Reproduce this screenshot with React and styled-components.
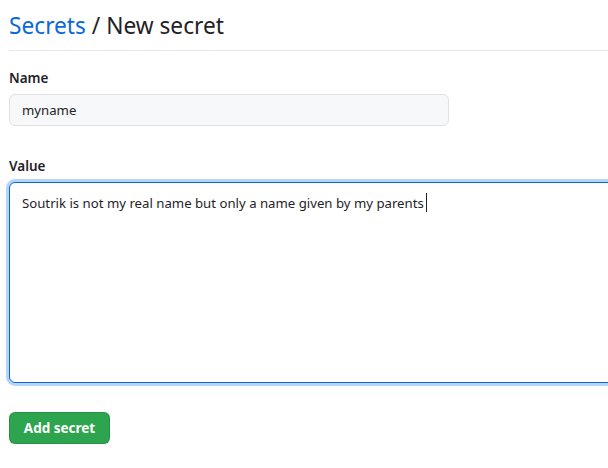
import React from "react";
import styled, { createGlobalStyle } from "styled-components";

const GlobalStyle = createGlobalStyle`
  html, body {
    margin: 0;
    padding: 0;
    background: #ffffff;
    overflow: hidden;
  }
  body {
    font-family: "Noto Sans", "Open Sans", sans-serif;
    color: #1f2328;
  }
`;

const Page = styled.div`
  width: 608px;
  height: 468px;
  padding: 0 0 0 9px;
  box-sizing: border-box;
  overflow: hidden;
`;

const Header = styled.div`
  padding-top: 10px;
  padding-bottom: 8px;
  border-bottom: 1px solid #e5e7ea;
  margin-right: -20px;
`;

const Title = styled.h1`
  margin: 0;
  font-size: 22.7px;
  font-weight: 400;
  line-height: 32px;
  color: #1f2328;
`;

const Crumb = styled.a`
  color: #0969da;
  text-decoration: none;
`;

const Form = styled.form`
  padding-top: 17px;
`;

const Field = styled.div`
  margin-bottom: ${(p) => p.$gap || 0}px;
`;

const Label = styled.label`
  display: block;
  font-size: 13.5px;
  font-weight: 600;
  line-height: 20px;
  margin-bottom: 6px;
  color: #1f2328;
`;

const Input = styled.input`
  display: block;
  box-sizing: border-box;
  width: 440px;
  height: 32px;
  padding: 0 12px;
  font-family: inherit;
  font-size: 13.2px;
  color: #1f2328;
  background: #f6f8fa;
  border: 1px solid #dde1e6;
  border-radius: 6px;
  outline: none;
`;

const TextBox = styled.div`
  box-sizing: border-box;
  width: 640px;
  height: 201px;
  padding: 10px 12px;
  font-size: 13.2px;
  line-height: 20px;
  color: #1f2328;
  background: #ffffff;
  border: 1px solid #0969da;
  border-radius: 6px;
  box-shadow: 0 0 0 3px #b6d5f6;
`;

const Caret = styled.span`
  display: inline-block;
  width: 1px;
  height: 19px;
  margin-left: 2px;
  vertical-align: -4px;
  background: #1f2328;
`;

const Button = styled.button`
  display: inline-flex;
  align-items: center;
  justify-content: center;
  box-sizing: border-box;
  width: 101px;
  height: 32px;
  padding: 0 8px;
  white-space: nowrap;
  font-family: inherit;
  font-size: 13.5px;
  font-weight: 700;
  color: #ffffff;
  background: #2da44e;
  border: 1px solid rgba(27, 31, 36, 0.15);
  border-radius: 6px;
  cursor: pointer;
`;

export default function App() {
  return (
    <>
      <GlobalStyle />
      <Page>
        <Header>
          <Title>
            <Crumb href="#">Secrets</Crumb> / New secret
          </Title>
        </Header>
        <Form onSubmit={(e) => e.preventDefault()}>
          <Field $gap={30}>
            <Label>Name</Label>
            <Input defaultValue="myname" />
          </Field>
          <Field $gap={29}>
            <Label>Value</Label>
            <TextBox>
              Soutrik is not my real name but only a name given by my parents
              <Caret />
            </TextBox>
          </Field>
          <Button type="submit">Add secret</Button>
        </Form>
      </Page>
    </>
  );
}
